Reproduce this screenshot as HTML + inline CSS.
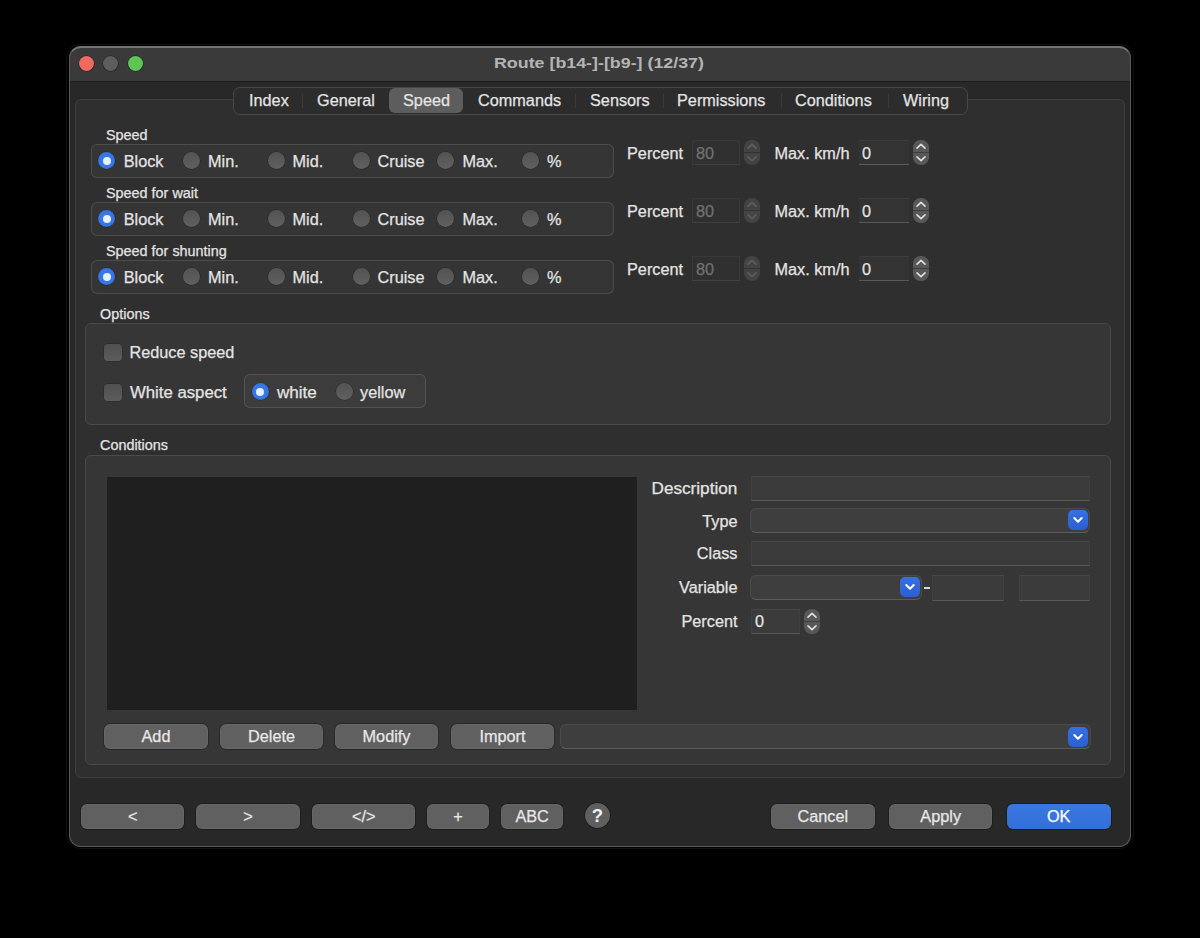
<!DOCTYPE html>
<html><head><meta charset="utf-8">
<style>
html,body{margin:0;padding:0;}
body{width:1200px;height:938px;background:#000;position:relative;overflow:hidden;font-family:"Liberation Sans",sans-serif;color:#dcdcdc;}
.a{position:absolute;box-sizing:border-box;}
.t{position:absolute;white-space:nowrap;font-size:16.25px;line-height:20px;color:#e4e4e4;-webkit-text-stroke:0.25px #e4e4e4;}
.s{font-size:14.4px;line-height:16px;}
.win{left:66px;top:44px;width:1068px;height:805px;border-radius:14px;background:#000;border:1px solid #111;}
.wbg{left:69px;top:46px;width:1062px;height:801px;border-radius:12px;background:#282828;}
.winin{left:69px;top:46px;width:1062px;height:801px;border-radius:12px;border:1px solid #5a5a5a;border-top:2px solid rgba(255,255,255,0.3);}
.title{left:69px;top:46px;width:1062px;height:36px;background:#3a3a3a;border-bottom:1px solid #1c1c1c;border-radius:12px 12px 0 0;}
.tl{width:15px;height:15px;border-radius:50%;box-shadow:0 0 0 0.6px rgba(0,0,0,0.4);}
.tabbox{left:75px;top:99px;width:1050px;height:679px;border:1px solid #3f3f3f;border-radius:6px;background:#2f2f2f;}
.tabbar{left:233px;top:87px;width:735px;height:28px;border:1px solid #474747;border-radius:7px;background:#2c2c2c;}
.sel{left:389px;top:88px;width:74px;height:24.5px;border-radius:6px;background:#5d5d5d;}
.sep{width:1px;height:14px;top:93.5px;background:#3b3b3b;}
.grp{border:1px solid rgba(255,255,255,0.115);border-radius:6px;background:rgba(255,255,255,0.03);}
.radio{width:17px;height:17px;border-radius:50%;background:linear-gradient(#535353,#606060);box-shadow:0 0 0 0.5px rgba(0,0,0,0.35);}
.radio.on{background:radial-gradient(circle,#3777e6 55%,#2a62d2 100%);}
.radio.on::after{content:"";position:absolute;left:4.5px;top:4.5px;width:8px;height:8px;border-radius:50%;background:#e8efff;}
.fld{background:#333;border-top:1px solid #3c3c3c;border-bottom:1px solid #595959;}
.step{width:16px;height:25px;border-radius:7.5px;background:#585858;overflow:hidden;}
.step svg{position:absolute;left:0;top:0;}
.step.dis{background:#434343;}
.fld.dis{background:#303030;border:1px solid #383838;border-bottom-color:#404040;}
.chk{width:17.5px;height:17.5px;border-radius:4px;background:linear-gradient(#4f4f4f,#5d5d5d);box-shadow:0 0 0 0.5px rgba(0,0,0,0.3);}
.btn{height:25px;border-radius:6px;background:#606060;text-align:center;line-height:25px;font-size:16.25px;color:#e8e8e8;-webkit-text-stroke:0.25px #e8e8e8;box-shadow:inset 0 0 0 1px rgba(255,255,255,0.045),0 0 0 0.75px rgba(0,0,0,0.35);}
.combo{background:#3e3e3e;border-radius:6px;border:1px solid #4a4a4a;border-bottom-color:#5c5c5c;}
.bb{width:20px;height:20px;border-radius:5px;background:linear-gradient(#3670e2,#2c5fd0);}
.bb svg{position:absolute;left:0;top:0;}
.opt{background:#363636;border-color:#494949;}
.list{background:#1f1f1f;}
.ok{background:linear-gradient(#3a77df,#3270d9);box-shadow:0 0 0 0.75px rgba(20,10,0,0.5);color:#fff;-webkit-text-stroke:0.25px #fff;}
.help{border-radius:50%;background:#5f5f5f;text-align:center;line-height:25px;font-size:18.5px;font-weight:bold;color:#f0f0f0;box-shadow:0 0 0 0.75px rgba(0,0,0,0.4);}
.dash{background:#d8d8d8;}
.f2{background:#3b3b3b;border:1px solid #404040;border-top-color:#474747;border-bottom-color:#585858;}
</style></head><body>
<div class="a win"></div>
<div class="a wbg"></div>
<div class="a title"></div>
<div class="a winin"></div>
<div class="a tl" style="left:78.5px;top:56px;background:#ee695e;"></div>
<div class="a tl" style="left:103px;top:56px;background:#5d5d5d;"></div>
<div class="a tl" style="left:127.5px;top:56px;background:#5ec454;"></div>
<div class="t" style="left:494px;top:53px;font-weight:bold;font-size:15.5px;color:#b4b4b4;-webkit-text-stroke:0;transform:scaleX(1.15);transform-origin:0 0;">Route [b14-]-[b9-] (12/37)</div>

<div class="a tabbox"></div>
<div class="a tabbar"></div>
<div class="a sel"></div>
<div class="t" style="left:249px;top:90px;">Index</div>
<div class="a sep" style="left:302px;"></div>
<div class="t" style="left:317px;top:90px;">General</div>
<div class="t" style="left:403px;top:90px;">Speed</div>
<div class="t" style="left:478px;top:90px;">Commands</div>
<div class="a sep" style="left:575px;"></div>
<div class="t" style="left:590px;top:90px;">Sensors</div>
<div class="a sep" style="left:663px;"></div>
<div class="t" style="left:677px;top:90px;">Permissions</div>
<div class="a sep" style="left:781px;"></div>
<div class="t" style="left:795px;top:90px;">Conditions</div>
<div class="a sep" style="left:888px;"></div>
<div class="t" style="left:903px;top:90px;">Wiring</div>

<!-- SPEEDROWS -->
<div class="t s" style="left:106px;top:127px;">Speed</div>
<div class="a grp" style="left:91px;top:143.5px;width:523px;height:34.5px;"></div>
<div class="a radio on" style="left:98.25px;top:152.3px;width:17px;height:17px;"></div>
<div class="t" style="left:123.75px;top:151px;">Block</div>
<div class="a radio" style="left:183.0px;top:152.3px;width:17px;height:17px;"></div>
<div class="t" style="left:208px;top:151px;">Min.</div>
<div class="a radio" style="left:267.75px;top:152.3px;width:17px;height:17px;"></div>
<div class="t" style="left:292.5px;top:151px;">Mid.</div>
<div class="a radio" style="left:352.75px;top:152.3px;width:17px;height:17px;"></div>
<div class="t" style="left:377.5px;top:151px;">Cruise</div>
<div class="a radio" style="left:437.25px;top:152.3px;width:17px;height:17px;"></div>
<div class="t" style="left:462.5px;top:151px;">Max.</div>
<div class="a radio" style="left:522.0px;top:152.3px;width:17px;height:17px;"></div>
<div class="t" style="left:547px;top:151px;">%</div>
<div class="t" style="left:627px;top:143px;">Percent</div>
<div class="a fld dis" style="left:691.5px;top:140px;width:48px;height:25px;"></div>
<div class="t" style="left:696px;top:143px;color:#707070;-webkit-text-stroke:0.25px #707070;">80</div>
<div class="a step dis" style="left:744px;top:140px;"><svg width="16" height="25" viewBox="0 0 16 25"><line x1="0" y1="12.5" x2="16" y2="12.5" stroke="#333" stroke-width="1"/><path d="M4 8.2 L8 4.4 L12 8.2 M4 16.8 L8 20.6 L12 16.8" fill="none" stroke="#5e5e5e" stroke-width="1.6" stroke-linecap="round" stroke-linejoin="round"/></svg></div>
<div class="t" style="left:774.5px;top:143px;">Max. km/h</div>
<div class="a fld" style="left:858.5px;top:140px;width:50.5px;height:25px;"></div>
<div class="t" style="left:862px;top:143px;">0</div>
<div class="a step" style="left:913px;top:140px;"><svg width="16" height="25" viewBox="0 0 16 25"><line x1="0" y1="12.5" x2="16" y2="12.5" stroke="#3e3e3e" stroke-width="1"/><path d="M4 8.2 L8 4.4 L12 8.2 M4 16.8 L8 20.6 L12 16.8" fill="none" stroke="#e0e0e0" stroke-width="1.6" stroke-linecap="round" stroke-linejoin="round"/></svg></div>
<div class="t s" style="left:106px;top:185px;">Speed for wait</div>
<div class="a grp" style="left:91px;top:201.5px;width:523px;height:34.5px;"></div>
<div class="a radio on" style="left:98.25px;top:210.3px;width:17px;height:17px;"></div>
<div class="t" style="left:123.75px;top:209px;">Block</div>
<div class="a radio" style="left:183.0px;top:210.3px;width:17px;height:17px;"></div>
<div class="t" style="left:208px;top:209px;">Min.</div>
<div class="a radio" style="left:267.75px;top:210.3px;width:17px;height:17px;"></div>
<div class="t" style="left:292.5px;top:209px;">Mid.</div>
<div class="a radio" style="left:352.75px;top:210.3px;width:17px;height:17px;"></div>
<div class="t" style="left:377.5px;top:209px;">Cruise</div>
<div class="a radio" style="left:437.25px;top:210.3px;width:17px;height:17px;"></div>
<div class="t" style="left:462.5px;top:209px;">Max.</div>
<div class="a radio" style="left:522.0px;top:210.3px;width:17px;height:17px;"></div>
<div class="t" style="left:547px;top:209px;">%</div>
<div class="t" style="left:627px;top:201px;">Percent</div>
<div class="a fld dis" style="left:691.5px;top:198px;width:48px;height:25px;"></div>
<div class="t" style="left:696px;top:201px;color:#707070;-webkit-text-stroke:0.25px #707070;">80</div>
<div class="a step dis" style="left:744px;top:198px;"><svg width="16" height="25" viewBox="0 0 16 25"><line x1="0" y1="12.5" x2="16" y2="12.5" stroke="#333" stroke-width="1"/><path d="M4 8.2 L8 4.4 L12 8.2 M4 16.8 L8 20.6 L12 16.8" fill="none" stroke="#5e5e5e" stroke-width="1.6" stroke-linecap="round" stroke-linejoin="round"/></svg></div>
<div class="t" style="left:774.5px;top:201px;">Max. km/h</div>
<div class="a fld" style="left:858.5px;top:198px;width:50.5px;height:25px;"></div>
<div class="t" style="left:862px;top:201px;">0</div>
<div class="a step" style="left:913px;top:198px;"><svg width="16" height="25" viewBox="0 0 16 25"><line x1="0" y1="12.5" x2="16" y2="12.5" stroke="#3e3e3e" stroke-width="1"/><path d="M4 8.2 L8 4.4 L12 8.2 M4 16.8 L8 20.6 L12 16.8" fill="none" stroke="#e0e0e0" stroke-width="1.6" stroke-linecap="round" stroke-linejoin="round"/></svg></div>
<div class="t s" style="left:106px;top:243px;">Speed for shunting</div>
<div class="a grp" style="left:91px;top:259.5px;width:523px;height:34.5px;"></div>
<div class="a radio on" style="left:98.25px;top:268.3px;width:17px;height:17px;"></div>
<div class="t" style="left:123.75px;top:267px;">Block</div>
<div class="a radio" style="left:183.0px;top:268.3px;width:17px;height:17px;"></div>
<div class="t" style="left:208px;top:267px;">Min.</div>
<div class="a radio" style="left:267.75px;top:268.3px;width:17px;height:17px;"></div>
<div class="t" style="left:292.5px;top:267px;">Mid.</div>
<div class="a radio" style="left:352.75px;top:268.3px;width:17px;height:17px;"></div>
<div class="t" style="left:377.5px;top:267px;">Cruise</div>
<div class="a radio" style="left:437.25px;top:268.3px;width:17px;height:17px;"></div>
<div class="t" style="left:462.5px;top:267px;">Max.</div>
<div class="a radio" style="left:522.0px;top:268.3px;width:17px;height:17px;"></div>
<div class="t" style="left:547px;top:267px;">%</div>
<div class="t" style="left:627px;top:259px;">Percent</div>
<div class="a fld dis" style="left:691.5px;top:256px;width:48px;height:25px;"></div>
<div class="t" style="left:696px;top:259px;color:#707070;-webkit-text-stroke:0.25px #707070;">80</div>
<div class="a step dis" style="left:744px;top:256px;"><svg width="16" height="25" viewBox="0 0 16 25"><line x1="0" y1="12.5" x2="16" y2="12.5" stroke="#333" stroke-width="1"/><path d="M4 8.2 L8 4.4 L12 8.2 M4 16.8 L8 20.6 L12 16.8" fill="none" stroke="#5e5e5e" stroke-width="1.6" stroke-linecap="round" stroke-linejoin="round"/></svg></div>
<div class="t" style="left:774.5px;top:259px;">Max. km/h</div>
<div class="a fld" style="left:858.5px;top:256px;width:50.5px;height:25px;"></div>
<div class="t" style="left:862px;top:259px;">0</div>
<div class="a step" style="left:913px;top:256px;"><svg width="16" height="25" viewBox="0 0 16 25"><line x1="0" y1="12.5" x2="16" y2="12.5" stroke="#3e3e3e" stroke-width="1"/><path d="M4 8.2 L8 4.4 L12 8.2 M4 16.8 L8 20.6 L12 16.8" fill="none" stroke="#e0e0e0" stroke-width="1.6" stroke-linecap="round" stroke-linejoin="round"/></svg></div>
<!-- /SPEEDROWS -->
<!-- REST -->
<div class="t s" style="left:100px;top:306px;">Options</div>
<div class="a grp opt" style="left:85px;top:323px;width:1025.5px;height:101.5px;"></div>
<div class="a chk" style="left:104px;top:343.5px;width:17.5px;height:17.5px;"></div>
<div class="t" style="left:129.5px;top:342px;">Reduce speed</div>
<div class="a chk" style="left:104px;top:383.5px;width:17.5px;height:17.5px;"></div>
<div class="t" style="left:129.5px;top:382px;transform:scaleX(1.03);transform-origin:0 0;">White aspect</div>
<div class="a grp" style="left:243.8px;top:373.8px;width:182.2px;height:34.5px;"></div>
<div class="a radio on" style="left:251.8px;top:383px;width:17px;height:17px;"></div>
<div class="t" style="left:276.7px;top:381.5px;transform:scaleX(1.05);transform-origin:0 0;">white</div>
<div class="a radio" style="left:335.5px;top:383px;width:17px;height:17px;"></div>
<div class="t" style="left:360px;top:381.5px;">yellow</div>
<div class="t s" style="left:100px;top:437px;">Conditions</div>
<div class="a grp opt" style="left:85px;top:454.5px;width:1025.5px;height:310px;"></div>
<div class="a list" style="left:107px;top:476.5px;width:530px;height:233px;"></div>
<div class="a btn" style="left:104px;top:724px;width:104px;height:25px;">Add</div>
<div class="a btn" style="left:220px;top:724px;width:103px;height:25px;">Delete</div>
<div class="a btn" style="left:335px;top:724px;width:103px;height:25px;">Modify</div>
<div class="a btn" style="left:451px;top:724px;width:103px;height:25px;">Import</div>
<div class="a combo" style="left:560px;top:724px;width:530.5px;height:25px;"></div>
<div class="a bb" style="left:1068px;top:726.5px;width:20px;height:20px;"><svg width="20" height="20" viewBox="0 0 20 20"><path d="M6.3 8 L10 11.7 L13.7 8" fill="none" stroke="#fff" stroke-width="2" stroke-linecap="round" stroke-linejoin="round"/></svg></div>
<div class="t" style="right:462.5px;top:478px;transform:scaleX(1.055);transform-origin:100% 0;">Description</div>
<div class="a fld f2" style="left:751px;top:475.5px;width:338.5px;height:25.5px;"></div>
<div class="t" style="right:462.5px;top:511px;">Type</div>
<div class="a combo" style="left:749.7px;top:508px;width:340.8px;height:25px;"></div>
<div class="a bb" style="left:1068px;top:510.3px;width:20px;height:20px;"><svg width="20" height="20" viewBox="0 0 20 20"><path d="M6.3 8 L10 11.7 L13.7 8" fill="none" stroke="#fff" stroke-width="2" stroke-linecap="round" stroke-linejoin="round"/></svg></div>
<div class="t" style="right:462.5px;top:543px;">Class</div>
<div class="a fld f2" style="left:751px;top:540.5px;width:338.5px;height:25.5px;"></div>
<div class="t" style="right:462.5px;top:577px;">Variable</div>
<div class="a combo" style="left:749.7px;top:575px;width:172.5px;height:25px;"></div>
<div class="a bb" style="left:899.8px;top:577px;width:20px;height:20px;"><svg width="20" height="20" viewBox="0 0 20 20"><path d="M6.3 8 L10 11.7 L13.7 8" fill="none" stroke="#fff" stroke-width="2" stroke-linecap="round" stroke-linejoin="round"/></svg></div>
<div class="a dash" style="left:923.5px;top:586.5px;width:6px;height:2px;"></div>
<div class="a fld f2" style="left:932px;top:575px;width:71.5px;height:25.5px;"></div>
<div class="a fld f2" style="left:1018.5px;top:575px;width:71.5px;height:25.5px;"></div>
<div class="t" style="right:462.5px;top:611px;">Percent</div>
<div class="a fld f2" style="left:751px;top:608.5px;width:49px;height:25.5px;"></div>
<div class="t" style="left:755px;top:611px;">0</div>
<div class="a step" style="left:803.5px;top:609px;"><svg width="16" height="25" viewBox="0 0 16 25"><line x1="0" y1="12.5" x2="16" y2="12.5" stroke="#3e3e3e" stroke-width="1"/><path d="M4 8.2 L8 4.4 L12 8.2 M4 16.8 L8 20.6 L12 16.8" fill="none" stroke="#e0e0e0" stroke-width="1.6" stroke-linecap="round" stroke-linejoin="round"/></svg></div>
<div class="a btn" style="left:81px;top:804px;width:103.3px;height:25px;">&lt;</div>
<div class="a btn" style="left:196px;top:804px;width:103.8px;height:25px;">&gt;</div>
<div class="a btn" style="left:312px;top:804px;width:103.3px;height:25px;">&lt;/&gt;</div>
<div class="a btn" style="left:427.2px;top:804px;width:61.8px;height:25px;">+</div>
<div class="a btn" style="left:501.2px;top:804px;width:61.8px;height:25px;">ABC</div>
<div class="a btn" style="left:771px;top:804px;width:103.5px;height:25px;">Cancel</div>
<div class="a btn" style="left:889px;top:804px;width:103.4px;height:25px;">Apply</div>
<div class="a btn ok" style="left:1006.7px;top:804px;width:104px;height:25px;">OK</div>
<div class="a help" style="left:585px;top:803px;width:25px;height:25px;">?</div>
<!-- /REST -->

</body></html>
